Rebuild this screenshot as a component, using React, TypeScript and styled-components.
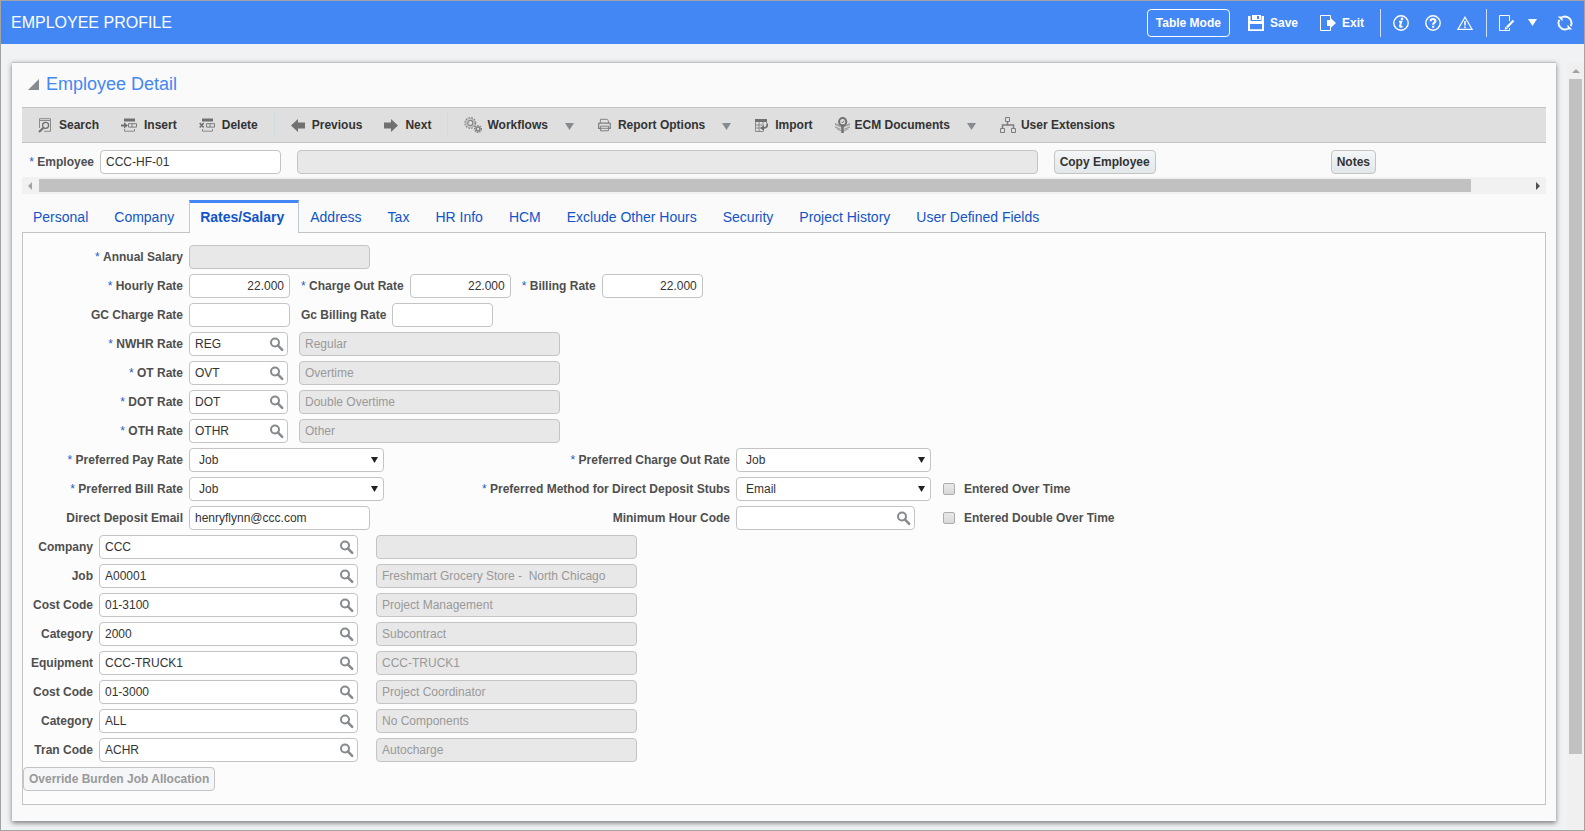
import React, { useId, useState } from "react";
import type { ReactNode } from "react";
import styled, { createGlobalStyle, css } from "styled-components";

const GlobalStyle = createGlobalStyle`
  *, *::before, *::after { box-sizing: border-box; }
  body {
    margin: 0;
    background: #f1f2f4;
    font-family: "Liberation Sans", Arial, sans-serif;
    font-size: 12px;
    line-height: 16px;
    color: #333;
  }
  button, input, select { font: inherit; color: inherit; margin: 0; }
  svg { display: block; flex: none; }
`;

/* ---------- page frame ---------- */

const Frame = styled.div`
  min-height: 100vh;
  display: flex;
  flex-direction: column;
  border: 1px solid #a3a3a3;
`;

const Header = styled.header`
  height: 43px;
  display: flex;
  align-items: center;
  padding: 0 11px 0 10px;
  background: #4387f5;
  color: #fff;
`;

const PageTitle = styled.h1`
  margin: 0;
  flex: 1;
  font-size: 16px;
  line-height: 20px;
  font-weight: 400;
`;

const HeaderButton = styled.button`
  display: flex;
  align-items: center;
  gap: 6px;
  margin-right: 22px;
  padding: 0;
  border: 0;
  background: none;
  font-weight: 700;
  line-height: 20px;
`;

const ModeButton = styled(HeaderButton)`
  height: 28px;
  padding: 0 8px;
  margin-right: 18px;
  border: 1px solid #fff;
  border-radius: 4px;
`;

const HeaderRule = styled.span`
  width: 1px;
  height: 28px;
  margin-left: -6px;
  margin-right: 12px;
  background: #cfdff8;
`;

const HeaderIcon = styled.button<{ $gap?: number }>`
  display: flex;
  padding: 0;
  margin-right: ${(p) => p.$gap ?? 16}px;
  border: 0;
  background: none;
`;

const Body = styled.div`
  flex: 1;
  display: flex;
  padding-top: 18px;
`;

const Card = styled.main`
  flex: 1;
  min-width: 0;
  margin: 0 11px 9px;
  padding: 0 10px 16px;
  border-top: 1px solid #c0c2c4;
  background: #fafafa;
  box-shadow: 0 2px 5px rgba(0, 0, 0, 0.5);
`;

const CardHead = styled.div`
  display: flex;
  align-items: center;
  gap: 7px;
  height: 44px;
  padding: 0 6px 2px;
`;

const CardTitle = styled.h2`
  margin: 0;
  font-size: 18px;
  line-height: 22px;
  font-weight: 400;
  color: #4387f5;
`;

const PlainButton = styled.button`
  display: flex;
  padding: 0;
  border: 0;
  background: none;
`;

/* ---------- scroll bars ---------- */

const VerticalTrack = styled.div`
  width: 17px;
  display: flex;
  flex-direction: column;
  align-items: center;
  padding: 7px 0 76px;
  background: #f0f0f0;
`;

const VerticalThumb = styled.div`
  flex: 1;
  width: 13px;
  margin-top: 6px;
  background: #c1c1c1;
`;

const HorizontalTrack = styled.div`
  height: 17px;
  display: flex;
  align-items: center;
  padding: 0 6px;
  background: #f1f1f1;
`;

const HorizontalThumb = styled.div`
  flex: 1;
  height: 13px;
  margin: 0 65px 0 7px;
  background: #c1c1c1;
`;

/* ---------- toolbar ---------- */

const Toolbar = styled.div`
  height: 36px;
  display: flex;
  align-items: center;
  padding: 0 5px;
  border-top: 1px solid #c4c4c4;
  border-bottom: 1px solid #c4c4c4;
  background: #dfdfdf;
`;

const ToolButton = styled.button<{ $tight?: boolean }>`
  display: flex;
  align-items: center;
  gap: ${(p) => (p.$tight ? 5 : 7)}px;
  padding: 0 11px;
  border: 0;
  background: none;
  font-weight: 700;
  white-space: nowrap;
`;

const ToolRule = styled.span`
  width: 1px;
  height: 26px;
  margin: 0 5px;
  background: #d3dbe2;
`;

const CaretButton = styled(PlainButton)`
  margin: 2px 13px 0 6px;
`;

/* ---------- fields ---------- */

const boxed = css`
  height: 24px;
  border: 1px solid #c4c4c4;
  border-radius: 4px;
  background: #fff;
`;

const TextBox = styled.input<{ $width?: number; $numeric?: boolean }>`
  ${boxed}
  width: ${(p) => (p.$width ? `${p.$width}px` : "auto")};
  flex: ${(p) => (p.$width ? "none" : 1)};
  min-width: 0;
  padding: 0 5px;
  text-align: ${(p) => (p.$numeric ? "right" : "left")};
  &:disabled {
    background: #e8e8e8;
    color: #999;
    opacity: 1;
  }
`;

const LookupBox = styled.div<{ $width: number }>`
  ${boxed}
  display: flex;
  align-items: center;
  width: ${(p) => p.$width}px;
  padding: 0 3px 0 5px;
`;

const LookupInput = styled.input`
  flex: 1;
  min-width: 0;
  height: 22px;
  padding: 0;
  border: 0;
  outline: 0;
  background: none;
`;

const SelectBox = styled.div`
  display: grid;
  align-items: center;
  width: 195px;
  > * { grid-area: 1 / 1; }
  > svg { justify-self: end; margin-right: 6px; pointer-events: none; }
`;

const Select = styled.select`
  ${boxed}
  appearance: none;
  width: 100%;
  padding: 0 20px 0 9px;
`;

const Label = styled.label<{ $width?: number }>`
  width: ${(p) => (p.$width ? `${p.$width}px` : "auto")};
  text-align: right;
  font-weight: 700;
  color: #4f4f4f;
  white-space: nowrap;
`;

const Star = styled.span`
  color: #1d5ccb;
  font-weight: 400;
`;

const Field = styled.div`
  display: flex;
  align-items: center;
  gap: 6px;
`;

const Row = styled.div<{ $gap?: number }>`
  display: flex;
  align-items: center;
  gap: ${(p) => p.$gap ?? 11}px;
`;

const EmployeeRow = styled.div`
  display: flex;
  align-items: center;
  gap: 16px;
  padding: 7px 170px 3px 0;
`;

const EmployeeName = styled(TextBox)`
  flex: 1;
`;

const ActionButton = styled.button<{ $push?: number }>`
  height: 24px;
  margin-left: ${(p) => p.$push ?? 0}px;
  padding: 0 5px;
  border: 1px solid #c4c4c4;
  border-radius: 4px;
  background: linear-gradient(#f4f6f7, #e2e7ea);
  font-weight: 700;
  white-space: nowrap;
  &:disabled {
    align-self: flex-start;
    background: #f5f6f7;
    color: #999;
  }
`;

/* ---------- tabs ---------- */

const TabList = styled.div`
  display: flex;
  height: 32px;
  margin-top: 6px;
`;

const Tab = styled.button<{ $active: boolean }>`
  height: 33px;
  padding: 0 15px 0 11px;
  border: 0;
  background: none;
  font-size: 14px;
  line-height: 20px;
  color: #1254c9;
  white-space: nowrap;
  ${(p) =>
    p.$active &&
    css`
      z-index: 1;
      padding: 0 14px 2px 10px;
      border: solid #bfcbd6;
      border-width: 0 1px;
      border-top: 3px solid #4387f5;
      background: #fcfcfc;
      font-weight: 700;
    `}
`;

const Panel = styled.section`
  display: flex;
  flex-direction: column;
  gap: 5px;
  padding: 12px 0 13px;
  border: 1px solid #c4c4c4;
  background: #fcfcfc;
`;

const PreferenceGrid = styled.div`
  display: grid;
  grid-template-columns: 160px 195px 340px 195px auto;
  gap: 5px 6px;
  align-items: center;
`;

const CheckField = styled.label`
  display: flex;
  align-items: center;
  gap: 9px;
  padding-left: 6px;
  font-weight: 700;
  color: #4f4f4f;
`;

const CheckBox = styled.input`
  appearance: none;
  width: 12px;
  height: 12px;
  border: 1px solid #acacac;
  border-radius: 2px;
  background: linear-gradient(#e9e9e9, #d9d9d9);
  &:checked { background: #4387f5; }
`;

/* ---------- icons ---------- */

const Triangle = ({ color, w = 9, h = 7 }: { color: string; w?: number; h?: number }) => (
  <svg width={w} height={h} viewBox="0 0 10 7" preserveAspectRatio="none" fill={color}>
    <path d="M0 0h10L5 7z" />
  </svg>
);

const Magnifier = () => (
  <svg width="15" height="15" viewBox="0 0 15 15" fill="none" stroke="#868a8e">
    <circle cx="6" cy="5.500" r="4" strokeWidth="2" />
    <path d="M8.800 8.400l4.400 4.500" strokeWidth="2.500" strokeLinecap="round" />
  </svg>
);

const SaveIcon = () => (
  <svg width="16" height="16" viewBox="0 0 16 16" fill="#fff">
    <path fillRule="evenodd" d="M0 1h2.500v5h11V1H16v15H0zM2 9v5.300h12V9z" />
    <path fillRule="evenodd" d="M4 0h9v5H4zM9 1v3h2V1z" />
    <path d="M1 7h14v1.600H1z" />
  </svg>
);

const ExitIcon = () => (
  <svg width="16" height="16" viewBox="0 0 16 16">
    <path d="M10.500 4V.5H.5v15h10V12" fill="none" stroke="#fff" />
    <path d="M7 5h3V2.500L16 8l-6 5.500V11H7z" fill="#fff" />
  </svg>
);

const InfoIcon = () => (
  <svg width="16" height="16" viewBox="0 0 16 16" fill="none" stroke="#fff">
    <circle cx="8" cy="8" r="7.200" strokeWidth="1.400" />
    <path d="M6 6.800h2.300L7 11q-.2 1 .8.900l1.700-.6" strokeWidth="1.900" />
    <circle cx="9" cy="3.900" r="1.300" fill="#fff" stroke="none" />
  </svg>
);

const HelpIcon = () => (
  <svg width="16" height="16" viewBox="0 0 16 16" fill="none" stroke="#fff">
    <circle cx="8" cy="8" r="7.200" strokeWidth="1.400" />
    <path d="M5.600 6.200C5.600 3.400 10.500 3.400 10.500 6.100 10.500 7.700 8.100 7.700 8.100 9.700" strokeWidth="2" />
    <path d="M7 10.800h2.200v1.900H7z" fill="#fff" stroke="none" />
  </svg>
);

const WarnIcon = () => (
  <svg width="16" height="14" viewBox="0 0 16 14" fill="none" stroke="#fff">
    <path d="M8 1.200L15 13.300H1z" strokeWidth="1.200" />
    <path d="M8 5v4.500M8 10.500v1.500" strokeWidth="1.600" />
  </svg>
);

const EditIcon = () => (
  <svg width="16" height="16" viewBox="0 0 16 16" fill="none" stroke="#fff">
    <path d="M10.500 6V.5H.5v15h10V13" />
    <path d="M14.500 5.500L8 12.300" strokeWidth="2.200" />
    <path d="M5.500 14.800l1-3.300 2.300 2.200z" fill="#fff" stroke="none" />
  </svg>
);

const RefreshIcon = () => (
  <svg width="16" height="16" viewBox="0 0 16 16">
    <path
      d="M5.400 2.100A6.500 6.500 0 0 1 13.700 11.100M10.600 13.900A6.500 6.500 0 0 1 2.300 4.900"
      fill="none"
      stroke="#fff"
      strokeWidth="1.900"
    />
    <path d="M.8 1.600h4.700v4.700zM15.200 14.400h-4.700V9.700z" fill="#fff" />
  </svg>
);

const G = "#707070";

const SearchDocIcon = () => (
  <svg width="14" height="15" viewBox="0 0 14 15" fill="none" stroke={G}>
    <path d="M1.500 10V.7h11v12.600H6" stroke="#8a8a8a" />
    <path d="M1.500 2.500h11" stroke="#8a8a8a" />
    <circle cx="7.600" cy="7.300" r="3" strokeWidth="1.300" />
    <path d="M5.500 9.700L1 14" strokeWidth="2" />
  </svg>
);

const RowsIcon = () => (
  <>
    <path d="M3 .5h11v3H3z" fill={G} />
    <path d="M7.500 5.700h8v3.400h-8zM11 5.700v3.400" fill="none" stroke="#7d7d7d" />
    <path d="M3.500 11v2.200h10V11" fill="none" stroke="#8a8a8a" />
  </>
);

const InsertIcon = () => (
  <svg width="16" height="14" viewBox="0 0 16 14">
    <RowsIcon />
    <path d="M0 6.500h3V4.200l4 3.200-4 3.200V8.500H0z" fill={G} />
  </svg>
);

const DeleteIcon = () => (
  <svg width="16" height="14" viewBox="0 0 16 14">
    <RowsIcon />
    <path d="M.7 5l4 4.500M4.700 5l-4 4.500" fill="none" stroke={G} strokeWidth="1.500" />
  </svg>
);

const ArrowIcon = ({ back }: { back?: boolean }) => (
  <svg width="14" height="13" viewBox="0 0 14 13" fill={G}>
    {back ? <path d="M0 6.500L7 0v3.500h7v6H7V13z" /> : <path d="M14 6.500L7 0v3.500H0v6h7V13z" />}
  </svg>
);

const GearsIcon = () => (
  <svg width="18" height="16" viewBox="0 0 18 16" fill="none" stroke="#858585">
    <circle cx="6.300" cy="6" r="5.300" strokeWidth="1.300" strokeDasharray="1.700 1.100" />
    <circle cx="6.300" cy="6" r="4.300" stroke="#a5a5a5" strokeWidth=".8" />
    <circle cx="6.300" cy="6" r="2.600" strokeWidth="1.300" />
    <circle cx="14" cy="12" r="3.300" strokeWidth="1.600" strokeDasharray="1.400 1" />
    <circle cx="14" cy="12" r="1.900" strokeWidth="1.500" />
  </svg>
);

const PrinterIcon = () => (
  <svg width="13" height="14" viewBox="0 0 13.700 14" fill="none" stroke="#7d7d7d">
    <path d="M2.500 5V1h7l1.500 1.500V5" />
    <path d="M2.500 10.500H.7V5.700q0-.7.700-.7h10.800q.7 0 .7.700v4.800h-1.800" strokeWidth="1.300" />
    <path d="M2.700 8.200h8.300v4.900H2.700zM2.700 10.500h8.300" />
  </svg>
);

const ImportIcon = () => (
  <svg width="13" height="13" viewBox="0 0 13 13" fill="none" stroke="#8a8a8a">
    <path d="M.5.500h11V4M.5.500v12h8M.5 6h7M.5 9h6M4 3v9.500M8 3v3" />
    <path d="M0 0h12v3H0z" fill={G} stroke="none" />
    <path d="M12 4.500c.8 3-.6 4.500-4 4.700" stroke={G} strokeWidth="1.800" />
    <path d="M9 5.800v6.400L5.200 9z" fill={G} stroke="none" />
  </svg>
);

const EcmIcon = () => (
  <svg width="15" height="16" viewBox="0 0 15 16">
    <path d="M0 6l7.500 3L15 6v2l-7.500 3L0 8zM0 9.300l7.500 3 7.500-3v1.500l-7.500 3-7.500-3zM1 12.300l6.500 2.600 6.500-2.600" fill="#a0a0a0" />
    <path d="M6.300 9h2.400v7H6.300z" fill={G} />
    <circle cx="7.700" cy="4.700" r="3.600" fill="#dfdfdf" stroke={G} strokeWidth="2" />
    <path d="M6.300 4.700l1.200 1.200 1.800-2.200" fill="none" stroke={G} />
  </svg>
);

const TreeIcon = () => (
  <svg width="16" height="16" viewBox="0 0 16 16" fill="none" stroke="#7d7d7d">
    <path d="M5.500.5h4v4h-4zM.5 11.500h4v4h-4zM11.500 11.500h4v4h-4z" />
    <path d="M7.500 5v3M2.500 11V8h11v3" strokeWidth="1.500" />
  </svg>
);

/* ---------- composed controls ---------- */

type LabelText = { text: string; required?: boolean };

const Caption = ({ text, required }: LabelText) => (
  <>
    {required && <Star>* </Star>}
    {text}
  </>
);

type TextFieldProps = LabelText & {
  labelWidth?: number;
  width: number;
  value?: string;
  disabled?: boolean;
  numeric?: boolean;
};

const TextField = ({ text, required, labelWidth, width, value = "", disabled, numeric }: TextFieldProps) => {
  const id = useId();
  return (
    <Field>
      <Label htmlFor={id} $width={labelWidth}><Caption text={text} required={required} /></Label>
      <TextBox id={id} $width={width} $numeric={numeric} defaultValue={value} disabled={disabled} />
    </Field>
  );
};

const Lookup = ({ id, width, value, name }: { id: string; width: number; value: string; name: string }) => (
  <LookupBox $width={width}>
    <LookupInput id={id} defaultValue={value} />
    <PlainButton type="button" aria-label={`Look up ${name}`}><Magnifier /></PlainButton>
  </LookupBox>
);

type LookupRowProps = LabelText & { labelWidth: number; width: number; gap?: number; value: string; description: string };

const LookupRow = ({ text, required, labelWidth, width, gap, value, description }: LookupRowProps) => {
  const id = useId();
  return (
    <Row $gap={gap}>
      <Field>
        <Label htmlFor={id} $width={labelWidth}><Caption text={text} required={required} /></Label>
        <Lookup id={id} width={width} value={value} name={text} />
      </Field>
      <TextBox $width={261} defaultValue={description} disabled aria-label={`${text} description`} />
    </Row>
  );
};

const LabeledSelect = ({ text, required, options }: LabelText & { options: string[] }) => {
  const id = useId();
  return (
    <>
      <Label htmlFor={id}><Caption text={text} required={required} /></Label>
      <SelectBox>
        <Select id={id}>
          {options.map((o) => <option key={o}>{o}</option>)}
        </Select>
        <Triangle color="#222" w={7} h={6} />
      </SelectBox>
    </>
  );
};

type ToolProps = { icon: ReactNode; children: string; menu?: boolean; tight?: boolean };

const Tool = ({ icon, children, menu, tight }: ToolProps) => (
  <>
    <ToolButton type="button" $tight={tight}>{icon}{children}</ToolButton>
    {menu && (
      <CaretButton type="button" aria-label={`${children} menu`}>
        <Triangle color="#868b90" />
      </CaretButton>
    )}
  </>
);

/* ---------- data ---------- */

const tabs = [
  "Personal", "Company", "Rates/Salary", "Address", "Tax", "HR Info", "HCM",
  "Exclude Other Hours", "Security", "Project History", "User Defined Fields",
];

const rateCodes = [
  ["NWHR Rate", "REG", "Regular"],
  ["OT Rate", "OVT", "Overtime"],
  ["DOT Rate", "DOT", "Double Overtime"],
  ["OTH Rate", "OTHR", "Other"],
];

const defaults = [
  ["Company", "CCC", ""],
  ["Job", "A00001", "Freshmart Grocery Store -  North Chicago"],
  ["Cost Code", "01-3100", "Project Management"],
  ["Category", "2000", "Subcontract"],
  ["Equipment", "CCC-TRUCK1", "CCC-TRUCK1"],
  ["Cost Code", "01-3000", "Project Coordinator"],
  ["Category", "ALL", "No Components"],
  ["Tran Code", "ACHR", "Autocharge"],
];

const rateOptions = ["Job", "Employee"];

export default function App() {
  const [active, setActive] = useState("Rates/Salary");
  return (
    <>
      <GlobalStyle />
      <Frame>
        <Header>
          <PageTitle>EMPLOYEE PROFILE</PageTitle>
          <ModeButton type="button">Table Mode</ModeButton>
          <HeaderButton type="button"><SaveIcon />Save</HeaderButton>
          <HeaderButton type="button"><ExitIcon />Exit</HeaderButton>
          <HeaderRule />
          <HeaderIcon type="button" aria-label="Information"><InfoIcon /></HeaderIcon>
          <HeaderIcon type="button" aria-label="Help"><HelpIcon /></HeaderIcon>
          <HeaderIcon type="button" aria-label="Warnings" $gap={19}><WarnIcon /></HeaderIcon>
          <HeaderRule />
          <HeaderIcon type="button" aria-label="Edit" $gap={13}><EditIcon /></HeaderIcon>
          <HeaderIcon type="button" aria-label="Edit menu" $gap={20}><Triangle color="#fff" /></HeaderIcon>
          <HeaderIcon type="button" aria-label="Refresh" $gap={0}><RefreshIcon /></HeaderIcon>
        </Header>
        <Body>
          <Card>
            <CardHead>
              <PlainButton type="button" aria-label="Collapse section">
                <svg width="11" height="11" viewBox="0 0 11 11"><path d="M11 0v11H0z" fill="#868b90" /></svg>
              </PlainButton>
              <CardTitle>Employee Detail</CardTitle>
            </CardHead>
            <Toolbar role="toolbar">
              <Tool icon={<SearchDocIcon />}>Search</Tool>
              <Tool icon={<InsertIcon />}>Insert</Tool>
              <Tool icon={<DeleteIcon />}>Delete</Tool>
              <ToolRule />
              <Tool icon={<ArrowIcon back />}>Previous</Tool>
              <Tool icon={<ArrowIcon />}>Next</Tool>
              <ToolRule />
              <Tool icon={<GearsIcon />} menu tight>Workflows</Tool>
              <Tool icon={<PrinterIcon />} menu>Report Options</Tool>
              <Tool icon={<ImportIcon />}>Import</Tool>
              <Tool icon={<EcmIcon />} menu tight>ECM Documents</Tool>
              <Tool icon={<TreeIcon />} tight>User Extensions</Tool>
            </Toolbar>
            <EmployeeRow>
              <TextField text="Employee" required labelWidth={72} width={181} value="CCC-HF-01" />
              <EmployeeName disabled aria-label="Employee name" />
              <ActionButton type="button">Copy Employee</ActionButton>
              <ActionButton type="button" $push={159}>Notes</ActionButton>
            </EmployeeRow>
            <HorizontalTrack>
              <svg width="4" height="8" viewBox="0 0 4 8"><path d="M4 0v8L0 4z" fill="#a3a3a3" /></svg>
              <HorizontalThumb />
              <svg width="4" height="8" viewBox="0 0 4 8"><path d="M0 0v8l4-4z" fill="#505050" /></svg>
            </HorizontalTrack>
            <TabList role="tablist">
              {tabs.map((t) => (
                <Tab key={t} type="button" role="tab" aria-selected={t === active} $active={t === active} onClick={() => setActive(t)}>
                  {t}
                </Tab>
              ))}
            </TabList>
            <Panel role="tabpanel">
              <TextField text="Annual Salary" required labelWidth={160} width={181} disabled />
              <Row>
                <TextField text="Hourly Rate" required labelWidth={160} width={101} value="22.000" numeric />
                <TextField text="Charge Out Rate" required width={101} value="22.000" numeric />
                <TextField text="Billing Rate" required width={101} value="22.000" numeric />
              </Row>
              <Row>
                <TextField text="GC Charge Rate" labelWidth={160} width={101} numeric />
                <TextField text="Gc Billing Rate" width={101} numeric />
              </Row>
              {rateCodes.map(([text, value, description]) => (
                <LookupRow key={text} text={text} required labelWidth={160} width={99} value={value} description={description} />
              ))}
              <PreferenceGrid>
                <LabeledSelect text="Preferred Pay Rate" required options={rateOptions} />
                <LabeledSelect text="Preferred Charge Out Rate" required options={rateOptions} />
                <span />
                <LabeledSelect text="Preferred Bill Rate" required options={rateOptions} />
                <LabeledSelect text="Preferred Method for Direct Deposit Stubs" required options={["Email", "Print"]} />
                <CheckField><CheckBox type="checkbox" />Entered Over Time</CheckField>
                <Label htmlFor="deposit-email">Direct Deposit Email</Label>
                <TextBox id="deposit-email" $width={181} defaultValue="henryflynn@ccc.com" />
                <Label htmlFor="minimum-hour">Minimum Hour Code</Label>
                <Lookup id="minimum-hour" width={179} value="" name="Minimum Hour Code" />
                <CheckField><CheckBox type="checkbox" />Entered Double Over Time</CheckField>
              </PreferenceGrid>
              {defaults.map(([text, value, description], i) => (
                <LookupRow key={i} text={text} labelWidth={70} width={259} gap={18} value={value} description={description} />
              ))}
              <ActionButton type="button" disabled>Override Burden Job Allocation</ActionButton>
            </Panel>
          </Card>
          <VerticalTrack>
            <svg width="8" height="4" viewBox="0 0 8 4"><path d="M0 4h8L4 0z" fill="#a3a3a3" /></svg>
            <VerticalThumb />
          </VerticalTrack>
        </Body>
      </Frame>
    </>
  );
}
